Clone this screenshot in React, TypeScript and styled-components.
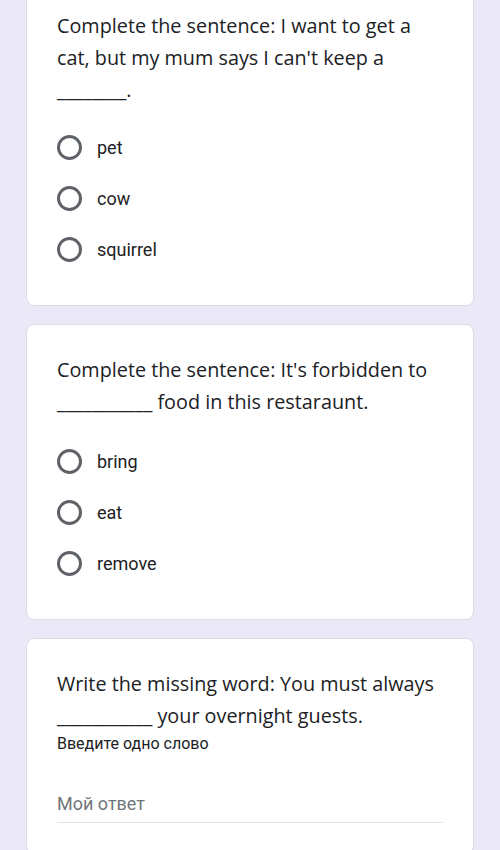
import styled, { createGlobalStyle } from 'styled-components';

const GlobalStyle = createGlobalStyle`
    html, body {
        margin: 0;
        padding: 0;
        background: #ebe9f7;
    }
    body {
        font-family: Roboto, "Liberation Sans", sans-serif;
        -webkit-font-smoothing: antialiased;
    }
`;

const Page = styled.div`
    display: flex;
    flex-direction: column;
    gap: 18px;
    padding: 0 26px 40px;
    margin-top: -20px;
`;

const Card = styled.div`
    background: #ffffff;
    border: 1px solid #dedbe9;
    border-radius: 8px;
    padding: 29px 30px 30px;
`;

const Question = styled.div`
    font-family: "Open Sans", Lato, sans-serif;
    font-size: 19.8px;
    line-height: 32px;
    color: #202124;
`;

const Options = styled.div<{ $gap: number }>`
    display: flex;
    flex-direction: column;
    margin-top: ${p => p.$gap}px;
`;

const OptionRow = styled.label`
    display: flex;
    align-items: center;
    height: 51px;
    gap: 15px;
`;

const Radio = styled.span`
    width: 19px;
    height: 19px;
    border: 3px solid #5f6368;
    border-radius: 50%;
    flex-shrink: 0;
`;

const OptionText = styled.span`
    font-size: 18px;
    color: #202124;
`;

const Hint = styled.div`
    font-size: 16px;
    line-height: 20px;
    color: #202124;
    margin-top: 2px;
`;

const AnswerField = styled.div`
    margin-top: 38px;
    width: 386px;
    padding-bottom: 6px;
    border-bottom: 1px solid #e4e3e8;
    font-size: 18px;
    line-height: 24px;
    color: #70757a;
`;

interface ChoiceQuestionProps {
    question: string[];
    options: string[];
    gap?: number;
}

function ChoiceQuestion({ question, options, gap = 18 }: ChoiceQuestionProps) {
    return (
        <Card>
            <Question>
                {question.map((line, i) => (
                    <div key={i}>{line}</div>
                ))}
            </Question>
            <Options $gap={gap}>
                {options.map(o => (
                    <OptionRow key={o}>
                        <Radio />
                        <OptionText>{o}</OptionText>
                    </OptionRow>
                ))}
            </Options>
        </Card>
    );
}

export default function App() {
    return (
        <>
            <GlobalStyle />
            <Page>
                <ChoiceQuestion
                    question={[
                        'Complete the sentence: I want to get a',
                        "cat, but my mum says I can't keep a",
                        '________.',
                    ]}
                    options={['pet', 'cow', 'squirrel']}
                    gap={16}
                />
                <ChoiceQuestion
                    question={[
                        "Complete the sentence: It's forbidden to",
                        '___________ food in this restaraunt.',
                    ]}
                    options={['bring', 'eat', 'remove']}
                />
                <Card>
                    <Question>
                        <div>Write the missing word: You must always</div>
                        <div>___________ your overnight guests.</div>
                    </Question>
                    <Hint>Введите одно слово</Hint>
                    <AnswerField>Мой ответ</AnswerField>
                </Card>
            </Page>
        </>
    );
}
